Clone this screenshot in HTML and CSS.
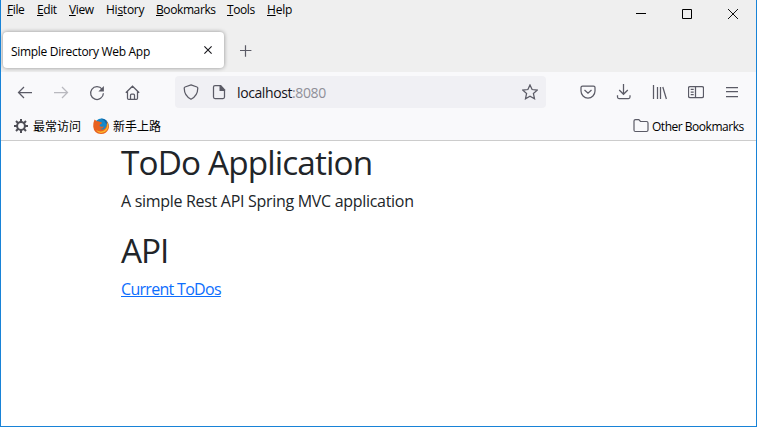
FILE: index.html
```html
<!DOCTYPE html>
<html lang="en">
<head>
<meta charset="utf-8">
<title>Simple Directory Web App</title>
<link rel="stylesheet" href="styles.css">
</head>
<body>
<div class="window">
  <header class="titlebar">
    <nav class="menu">
      <span class="file"><u>F</u>ile</span><span class="edit"><u>E</u>dit</span><span class="view"><u>V</u>iew</span><span class="history">Hi<u>s</u>tory</span><span class="bookmarks"><u>B</u>ookmarks</span><span class="tools"><u>T</u>ools</span><span class="help"><u>H</u>elp</span>
    </nav>
    <div class="controls">
      <svg width="10" height="10" viewBox="0 0 10 10"><path d="M0 4.500h10" stroke="#000"/></svg>
      <svg width="10" height="10" viewBox="0 0 10 10"><path d="M.5.5h9v9h-9z" fill="none" stroke="#000"/></svg>
      <svg width="10" height="10" viewBox="0 0 10 10"><path d="M0 0l10 10M10 0L0 10" stroke="#111"/></svg>
    </div>
  </header>
  <div class="tabs">
    <div class="tab"><span class="tab-title">Simple Directory Web App</span>
      <svg width="8" height="8" viewBox="0 0 8 8"><path d="M.4.4l7.2 7.2M7.6.4L.4 7.6" stroke="#15141a" stroke-width="1.1"/></svg>
    </div>
    <svg class="plus" width="12" height="12" viewBox="0 0 12 12"><path d="M5.500 .3v11.400M0 5.500h11.400" stroke="#5b5b66" stroke-width="1.2"/></svg>
  </div>
  <div class="toolbar">
    <div class="nav-buttons">
      <svg class="icon" viewBox="0 0 16 16"><path d="M15 7.500H1.500M7 2L1.500 7.500 7 13"/></svg>
      <svg class="icon disabled" viewBox="0 0 16 16"><path d="M1 7.500h13.500M9 2L14.500 7.500 9 13"/></svg>
      <svg class="icon" viewBox="0 0 16 16"><path d="M13.100 4.200A6.400 6.400 0 1 0 14.400 8.300"/><path class="solid" d="M14.900 1v5.500h-5.500z"/></svg>
      <svg class="icon" viewBox="0 0 16 16"><path d="M.8 7.700L7.500 1.200l6.700 6.500M2.500 6.300v6.900q0 1.200 1.200 1.200h7.600q1.200 0 1.200-1.200V6.300M5.500 14.200v-4q0-1 1-1h2q1 0 1 1v4"/></svg>
    </div>
    <div class="urlbar">
      <svg class="icon" viewBox="0 0 16 16"><path d="M8 .8L14 3q.8.300.8 1.100C14.700 9.800 12 13.400 8 15.200 4 13.400 1.300 9.800 1.200 4.100q0-.8.8-1.100z"/></svg>
      <svg class="icon" viewBox="0 0 16 16"><path d="M9 1.500H4Q2.500 1.500 2.500 3v10Q2.500 14.500 4 14.500h8q1.500 0 1.500-1.500V6"/><path class="solid" d="M8.500 1H10l4.100 4.500V7H8.500z"/></svg>
      <span class="url">localhost<span>:8080</span></span>
      <svg class="icon star" viewBox="0 0 16 16"><path d="M8 .9l2.100 4.600 5.100.6-3.800 3.400 1.100 5.200L8 12.100l-4.500 2.600 1.100-5.200L.8 6.100l5.100-.6z"/></svg>
    </div>
    <div class="tools-right">
      <svg class="icon" viewBox="0 0 16 16"><path d="M2.500 2h11q1.500 0 1.500 1.500V7A7 7 0 0 1 1 7V3.500Q1 2 2.500 2zM4.500 6L8 9.200 11.500 6"/></svg>
      <svg class="icon" viewBox="0 0 16 16"><path d="M7.500 0v10.300M3.200 6l4.300 4.300L11.800 6M1.500 11.200v1.800q0 1.500 1.500 1.500h9.500q1.500 0 1.500-1.500v-1.800"/></svg>
      <svg class="icon" viewBox="0 0 16 16"><path d="M1.500 1v14M5.500 3v12M8.500 3v12M10.800 3l3.600 12"/></svg>
      <svg class="icon" viewBox="0 0 16 16"><path d="M2 2.500h12q1.500 0 1.500 1.500v8q0 1.500-1.500 1.500H2Q.5 13.500.5 12V4q0-1.500 1.500-1.500zM7.500 2.500v11M2.700 5.300h3M2.700 8h3M2.700 10.700h3"/></svg>
      <svg class="icon" viewBox="0 0 16 16"><path d="M2 3.500h12M2 7.500h12M2 12.500h12"/></svg>
    </div>
  </div>
  <div class="bookmarks-bar">
    <svg class="gear" viewBox="0 0 14 14"><g stroke="#4e4e56" stroke-width="2"><path d="M7 0v3M7 11v3M0 7h3M11 7h3M2 2l2.200 2.200M9.800 9.800L12 12M12 2L9.800 4.200M4.200 9.800L2 12"/></g><circle cx="7" cy="7" r="3.900" fill="none" stroke="#4e4e56" stroke-width="2"/></svg>
    <span class="frequent">最常访问</span>
    <svg class="firefox" viewBox="0 0 16 16">
      <circle cx="8.500" cy="7.500" r="7" fill="#1689c9"/>
      <path d="M8 .5q6 0 7 6l-2-1q-1-3-5-5z" fill="#1264a4"/>
      <path d="M1.500 1.500L4 3.300Q6 2.800 7 4l2 .6Q9 6 7 6.500L6.500 8Q8 9.500 11 8.300 10 11.500 7 10.700 10.500 13 13 9q1.500-3 .5-6Q17 7 15.500 11 13.500 16 8 16 1 15.600.3 9 0 5 1.500 1.500z" fill="#e86120"/>
      <path d="M14 4q2.500 4 0 8-2.500 3.500-6.500 3-3-.5-4.500-3 4 2.500 8 .5Q15 10 14 4z" fill="#fdb52b"/>
    </svg>
    <span class="started">新手上路</span>
    <svg class="folder" viewBox="0 0 16 16"><path d="M2.500 1.600h3.300L7.500 3.500h6q1.500 0 1.500 1.500v7q0 1.500-1.500 1.500h-11Q1 13.500 1 12V3.100q0-1.500 1.500-1.500z" fill="none" stroke="#5b5b66" stroke-width="1.200"/></svg>
    <span class="other">Other Bookmarks</span>
  </div>
  <main class="page">
    <h1 class="main-heading">ToDo Application</h1>
    <p class="description">A simple Rest API Spring MVC application</p>
    <h1 class="api-heading">API</h1>
    <a href="#">Current ToDos</a>
  </main>
</div>
</body>
</html>
```
FILE: styles.css
```css
* { box-sizing: border-box; }
body {
  margin: 0;
  font: 12px/16px "Open Sans", "Noto Sans CJK SC", sans-serif;
  color: #000;
}
.window {
  height: 427px;
  border: 1px solid #1883d7;
  border-top: 0;
  background: #fff;
  overflow: hidden;
}
svg { display: block; flex: none; }
span, h1, p, a { white-space: nowrap; }
.titlebar {
  height: 31px;
  display: flex;
  justify-content: space-between;
  background: #efefef;
}
.menu { display: flex; padding: 2px 0 0 6px; letter-spacing: -.4px; }
.menu u { text-underline-offset: 1px; text-decoration-thickness: 1px; }
.file { width: 30px; }
.edit { width: 32px; }
.view { width: 37px; }
.history { width: 50px; letter-spacing: -.25px; }
.bookmarks { width: 71px; }
.tools { width: 40px; }
.help { letter-spacing: -.2px; }
.controls { display: flex; align-items: center; gap: 36px; padding-right: 18px; height: 28px; }
.tabs { height: 41px; display: flex; padding: 1px 0 0 2px; background: #efefef; }
.tab {
  width: 221px;
  height: 36px;
  display: flex;
  align-items: center;
  justify-content: space-between;
  padding: 0 12px 0 8px;
  border-radius: 4px;
  background: #fff;
  box-shadow: 0 0 4px rgba(0, 0, 0, .4);
}
.tab-title { padding-top: 3px; letter-spacing: -.3px; }
.plus { margin: 13px 0 0 16px; }
.toolbar { height: 41px; display: flex; padding-top: 4px; background: #f9f9fb; }
.icon { width: 16px; height: 16px; fill: none; stroke: #5b5b66; stroke-width: 1.25; }
.icon .solid { fill: #5b5b66; stroke: none; }
.disabled { opacity: .4; }
.nav-buttons { display: flex; gap: 20px; width: 174px; padding: 9px 0 0 16px; }
.urlbar {
  width: 371px;
  height: 32px;
  display: flex;
  align-items: center;
  padding: 0 8px;
  border-radius: 4px;
  background: #f0f0f4;
}
.urlbar .icon + .icon { margin-left: 12px; }
.url { margin-left: 10px; padding-top: 2px; font-size: 14px; letter-spacing: -.4px; color: #15141a; }
.url span { color: #8f8f98; }
.urlbar .star { margin-left: auto; }
.tools-right { display: flex; gap: 20px; padding: 8px 0 0 34px; }
.bookmarks-bar {
  height: 28px;
  display: flex;
  align-items: center;
  padding: 0 12px 1px 13px;
  border-bottom: 1px solid #ccc;
  background: #f9f9fb;
}
.bookmarks-bar span { padding-top: 2px; }
.gear { width: 14px; height: 14px; }
.frequent { width: 60px; margin-left: 5px; }
.firefox { width: 16px; height: 16px; }
.started { margin-left: 4px; }
.folder { width: 16px; height: 16px; margin-left: auto; }
.other { width: 92px; margin-left: 3px; letter-spacing: -.48px; }
.page { padding: 1px 0 0 120px; font-size: 16px; line-height: 24px; color: #212529; }
h1 { margin: 0 0 7px; font-size: 33.35px; line-height: 40px; font-weight: 400; }
.main-heading { letter-spacing: -.87px; }
.api-heading { letter-spacing: -1px; }
.description { margin: 0 0 17px; letter-spacing: -.3px; }
.page a { color: #0d6efd; letter-spacing: -.7px; text-underline-offset: 1px; text-decoration-thickness: 1px; }
```
